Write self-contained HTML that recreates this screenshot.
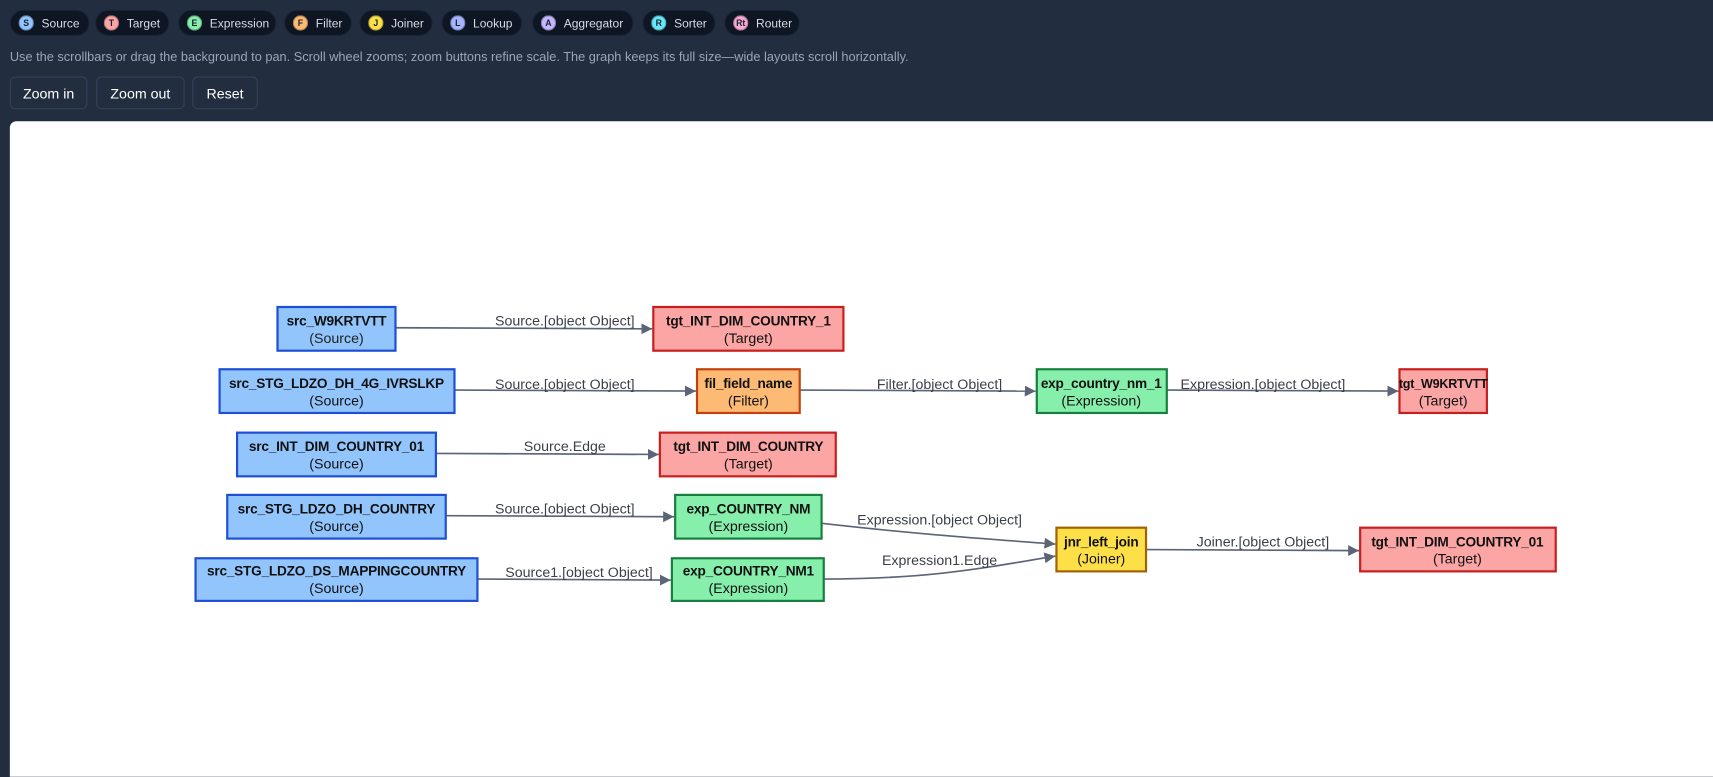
<!DOCTYPE html>
<html><head><meta charset="utf-8"><style>
html,body{margin:0;padding:0;width:1713px;height:751px;overflow:hidden;background:#222d40;}
#w{position:absolute;left:0;top:0;width:1568px;height:688px;transform:scale(1.0925);transform-origin:0 0;font-family:"Liberation Sans",sans-serif;}
.chip{position:absolute;top:9px;height:24px;border-radius:12px;background:#0f1623;color:#d6dbe4;font-size:11px;line-height:24px;box-sizing:border-box;padding-left:28px;border:1px solid #1b2536}
.chip i{position:absolute;left:7px;top:4px;width:14px;height:14px;border-radius:50%;font-style:normal;font-size:8px;line-height:14px;text-align:center;color:#1b2333;font-weight:bold;box-sizing:border-box;border:1px solid rgba(0,0,0,.3)}
.help{position:absolute;left:9px;top:46px;font-size:11.7px;color:#9aa6b8}
.btn{position:absolute;top:70px;height:30px;border:1px solid #33405a;border-radius:5px;background:#222d40;color:#fff;font-size:13px;line-height:29px;text-align:center;box-sizing:border-box}
#panel{position:absolute;left:9px;top:111px;width:1559px;height:600px;background:#fff;border-top-left-radius:6px}
svg text{font-family:"Liberation Sans",sans-serif}
.b{font-weight:bold;font-size:12.5px;letter-spacing:-0.2px}
</style></head><body><div id="w">
<div class="chip" style="left:9px;width:73px"><i style="background:#93c5fd">S</i>Source</div>
<div class="chip" style="left:87px;width:68px"><i style="background:#fca5a5">T</i>Target</div>
<div class="chip" style="left:163px;width:90px"><i style="background:#86efac">E</i>Expression</div>
<div class="chip" style="left:260px;width:62px"><i style="background:#fdba74">F</i>Filter</div>
<div class="chip" style="left:329px;width:67px"><i style="background:#fde047">J</i>Joiner</div>
<div class="chip" style="left:404px;width:74px"><i style="background:#a5b4fc">L</i>Lookup</div>
<div class="chip" style="left:487px;width:93px"><i style="background:#c4b5fd">A</i>Aggregator</div>
<div class="chip" style="left:588px;width:67px"><i style="background:#67e8f9">R</i>Sorter</div>
<div class="chip" style="left:663px;width:69px"><i style="background:#f9a8d4">Rt</i>Router</div>
<div class="help">Use the scrollbars or drag the background to pan. Scroll wheel zooms; zoom buttons refine scale. The graph keeps its full size—wide layouts scroll horizontally.</div>
<div class="btn" style="left:9px;width:71px">Zoom in</div>
<div class="btn" style="left:88px;width:81px">Zoom out</div>
<div class="btn" style="left:176px;width:60px">Reset</div>
<div id="panel"></div>
<svg style="position:absolute;left:0;top:0" width="1568" height="688">
<defs><marker id="a" viewBox="0 0 10 10" refX="10" refY="5" markerWidth="10" markerHeight="10" markerUnits="userSpaceOnUse" orient="auto"><path d="M0,0L10,5L0,10z" fill="#5b6577"/></marker></defs>
<g stroke="#5b6577" stroke-width="1.5" fill="none" marker-end="url(#a)">
<path d="M362,300 L597,301"/>
<path d="M416,357 L637,358"/>
<path d="M732,357 L948,358"/>
<path d="M1068,357 L1280,358"/>
<path d="M399,415 L603,416"/>
<path d="M408,472 L617,473"/>
<path d="M752,479 C850,490 900,493 966,498"/>
<path d="M1049,503 L1244,504"/>
<path d="M437,530 L614,531"/>
<path d="M754,530 C850,530 900,520 966,509"/>
</g>
<g font-size="13" fill="#3a3f48" text-anchor="middle">
<text x="517" y="298">Source.[object Object]</text>
<text x="517" y="356">Source.[object Object]</text>
<text x="860" y="356">Filter.[object Object]</text>
<text x="1156" y="356">Expression.[object Object]</text>
<text x="517" y="413">Source.Edge</text>
<text x="517" y="470">Source.[object Object]</text>
<text x="860" y="480">Expression.[object Object]</text>
<text x="860" y="517">Expression1.Edge</text>
<text x="1156" y="500">Joiner.[object Object]</text>
<text x="530" y="528">Source1.[object Object]</text>
</g>
<g stroke-width="2" font-size="13" text-anchor="middle" fill="#111">
<g><rect x="254" y="281" width="108" height="40" fill="#93c5fd" stroke="#1d4ed8"/><text x="308" y="298" class="b">src_W9KRTVTT</text><text x="308" y="314" fill="#222">(Source)</text></g>
<g><rect x="598" y="281" width="174" height="40" fill="#fca5a5" stroke="#c81e1e"/><text x="685" y="298" class="b">tgt_INT_DIM_COUNTRY_1</text><text x="685" y="314">(Target)</text></g>
<g><rect x="201" y="338" width="215" height="40" fill="#93c5fd" stroke="#1d4ed8"/><text x="308" y="355" class="b">src_STG_LDZO_DH_4G_IVRSLKP</text><text x="308" y="371">(Source)</text></g>
<g><rect x="638" y="338" width="94" height="40" fill="#fdba74" stroke="#c2410c"/><text x="685" y="355" class="b">fil_field_name</text><text x="685" y="371">(Filter)</text></g>
<g><rect x="949" y="338" width="119" height="40" fill="#86efac" stroke="#15803d"/><text x="1008" y="355" class="b">exp_country_nm_1</text><text x="1008" y="371">(Expression)</text></g>
<g><rect x="1281" y="338" width="80" height="40" fill="#fca5a5" stroke="#c81e1e"/><text x="1321" y="355" class="b" style="font-size:11.5px">tgt_W9KRTVTT</text><text x="1321" y="371">(Target)</text></g>
<g><rect x="217" y="396" width="182" height="40" fill="#93c5fd" stroke="#1d4ed8"/><text x="308" y="413" class="b">src_INT_DIM_COUNTRY_01</text><text x="308" y="429">(Source)</text></g>
<g><rect x="604" y="396" width="161" height="40" fill="#fca5a5" stroke="#c81e1e"/><text x="685" y="413" class="b">tgt_INT_DIM_COUNTRY</text><text x="685" y="429">(Target)</text></g>
<g><rect x="208" y="453" width="200" height="40" fill="#93c5fd" stroke="#1d4ed8"/><text x="308" y="470" class="b">src_STG_LDZO_DH_COUNTRY</text><text x="308" y="486">(Source)</text></g>
<g><rect x="618" y="453" width="134" height="40" fill="#86efac" stroke="#15803d"/><text x="685" y="470" class="b">exp_COUNTRY_NM</text><text x="685" y="486">(Expression)</text></g>
<g><rect x="967" y="483" width="82" height="40" fill="#fde047" stroke="#a16207"/><text x="1008" y="500" class="b">jnr_left_join</text><text x="1008" y="516">(Joiner)</text></g>
<g><rect x="1245" y="483" width="179" height="40" fill="#fca5a5" stroke="#c81e1e"/><text x="1334" y="500" class="b">tgt_INT_DIM_COUNTRY_01</text><text x="1334" y="516">(Target)</text></g>
<g><rect x="179" y="511" width="258" height="39" fill="#93c5fd" stroke="#1d4ed8"/><text x="308" y="527" class="b">src_STG_LDZO_DS_MAPPINGCOUNTRY</text><text x="308" y="543">(Source)</text></g>
<g><rect x="615" y="511" width="139" height="39" fill="#86efac" stroke="#15803d"/><text x="685" y="527" class="b">exp_COUNTRY_NM1</text><text x="685" y="543">(Expression)</text></g>
</g>
</svg>
</div></body></html>
